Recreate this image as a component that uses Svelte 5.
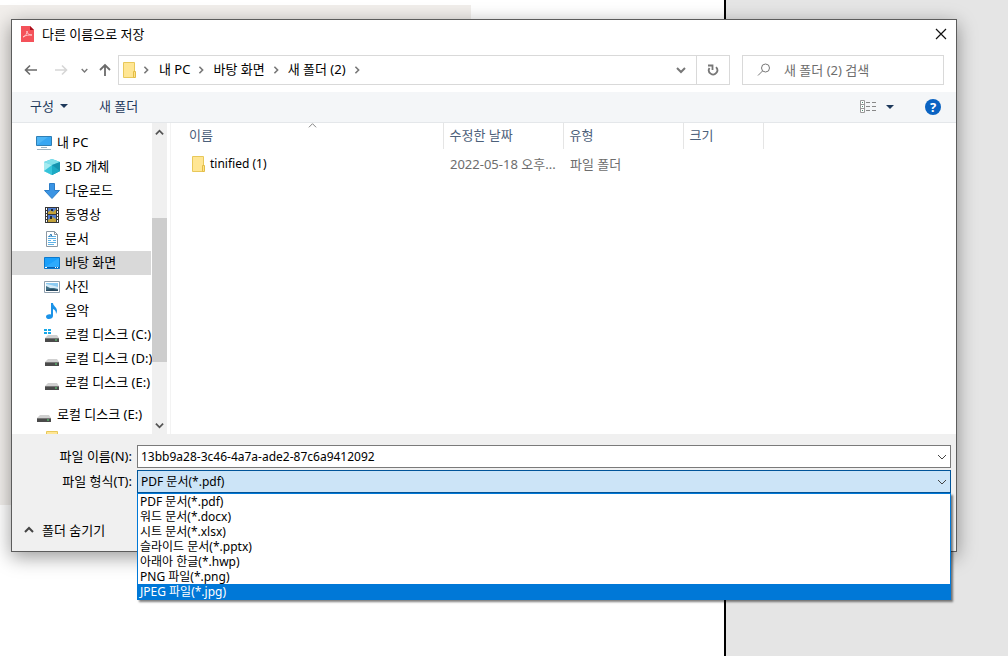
<script>
	let filename = $state('13bb9a28-3c46-4a7a-ade2-87c6a9412092');
	let selected = $state('PDF 문서(*.pdf)');
	let highlighted = $state('JPEG 파일(*.jpg)');
	let current = $state('desktop');

	const crumbs = ['내 PC', '바탕 화면', '새 폴더 (2)'];

	const places = [
		{ id: 'pc', name: '내 PC', level: 0 },
		{ id: 'objects', name: '3D 개체', level: 1 },
		{ id: 'downloads', name: '다운로드', level: 1 },
		{ id: 'videos', name: '동영상', level: 1 },
		{ id: 'documents', name: '문서', level: 1 },
		{ id: 'desktop', name: '바탕 화면', level: 1 },
		{ id: 'pictures', name: '사진', level: 1 },
		{ id: 'music', name: '음악', level: 1 },
		{ id: 'system', name: '로컬 디스크 (C:)', level: 1 },
		{ id: 'disk', name: '로컬 디스크 (D:)', level: 1 },
		{ id: 'disk', name: '로컬 디스크 (E:)', level: 1 },
		{ id: 'disk', name: '로컬 디스크 (E:)', level: 0, spaced: true },
		{ id: 'folder', name: '', level: 1 }
	];

	const files = [
		{ name: 'tinified (1)', date: '2022-05-18 오후...', type: '파일 폴더', size: '' }
	];

	const formats = [
		'PDF 문서(*.pdf)',
		'워드 문서(*.docx)',
		'시트 문서(*.xlsx)',
		'슬라이드 문서(*.pptx)',
		'아래아 한글(*.hwp)',
		'PNG 파일(*.png)',
		'JPEG 파일(*.jpg)'
	];
</script>

{#snippet folder()}
	<svg class="icon" viewBox="0 0 16 16" aria-hidden="true">
		<path d="M2.500.5h11v15h-11z" fill="#ffe694" stroke="#e8c85a" />
		<path d="M12.500 15.500v-6h2v6z" fill="#ffe28a" stroke="#e3bd45" />
	</svg>
{/snippet}

{#snippet chevron(d, size, color, width)}
	<svg width={size} height={size} viewBox="0 0 10 10" aria-hidden="true">
		<path {d} fill="none" stroke={color} stroke-width={width} />
	</svg>
{/snippet}

{#snippet placeIcon(id)}
	{#if id == 'folder'}
		{@render folder()}
	{:else}
		<svg class="icon" viewBox="0 0 16 16" aria-hidden="true">
			{#if id == 'pc'}
				<path d="M.5 1.500h15v9H.5z" fill="#4db5f5" stroke="#2f7fb5" />
				<path d="M1 10L12 2h3v8z" fill="#2a9df0" opacity=".6" />
				<path d="M5 12.500h6M1 14.500h14" stroke="#9db2c0" />
			{:else if id == 'objects'}
				<path d="M8 0l8 3v9l-8 4-8-4V3z" fill="#35c3da" />
				<path d="M8 0l8 3-8 3-8-3z" fill="#7fdfea" />
				<path d="M0 3l8 3v10l-8-4z" fill="#a5ebf0" />
				<path d="M8 6l8-3v9l-8 4z" fill="#1592ae" />
				<path d="M0 12l8-6v10z" fill="#35c3da" />
				<path d="M8 6l8 6-8 4z" fill="#1daac4" />
			{:else if id == 'downloads'}
				<path d="M5.500.5h5v7h5L8 15.500.5 7.500h5z" fill="#3a94e4" stroke="#2c7dc7" />
			{:else if id == 'videos'}
				<path d="M1 0h14v16H1z" fill="#383838" />
				<path d="M4 1h8v6H4zM4 8h8v7H4z" fill="#4f7cd0" />
				<path d="M4 5l3-2 2 2 3-3v5H4zM4 13l4-3 4 2v3H4z" fill="#c2a23a" />
				<path d="M7 2h2v2H7zM6 9h2v3H6z" fill="#1c2a3a" />
				<path d="M2.500 1v14M13.500 1v14" stroke="#fff" stroke-dasharray="2 1" />
			{:else if id == 'documents'}
				<path d="M2.500.5h8l3 3v12h-11z" fill="#fff" stroke="#8b98a3" />
				<path d="M10.500.5v3h3" fill="none" stroke="#8b98a3" />
				<path d="M4 5.500h3M4 7.500h8M4 9.500h3M4 11.500h8M4 13.500h6M8 5.500h4M9 9.500h3" stroke="#5fb2e6" />
				<path d="M5 6l2-3 1 3" fill="none" stroke="#2b79b8" />
			{:else if id == 'desktop'}
				<path d="M.5 2.500h15v11H.5z" fill="#1aa0fb" stroke="#0b78cc" />
				<path d="M1 12L15 3v9z" fill="#41b6ff" opacity=".5" />
				<path d="M1 12.500h14" stroke="#0a5fae" />
				<path d="M1 12.500h2M11 12.500h1M13 12.500h1" stroke="#fff" />
			{:else if id == 'pictures'}
				<path d="M.5 2.500h15v11H.5z" fill="#fff" stroke="#8fa0ae" />
				<path d="M2 4h12v8H2z" fill="#8ccbf2" />
				<path d="M2 5l5 1 7 2v2H2z" fill="#d4ebf8" />
				<path d="M2 7l4 2 4 0 4 1v2H2z" fill="#3f6f86" />
				<path d="M2 11l6-1 6 1v1H2z" fill="#27485e" />
			{:else if id == 'music'}
				<path d="M7 0h2c0 3 4 4 4 8 0 1-.5 2-1 3 0-3-1-4-3-5v7c0 2-2 3-4 3-1.500 0-3-.8-3-2.300C2 12 4 11 7 11.500z" fill="#1c93e8" />
			{:else}
				<path d="M4 8h9l2 3H1z" fill="#d0d0d0" />
				<path d="M1 11h14v4H1z" fill="#4a4a4a" />
				<path d="M1 11.500h14" stroke="#777" />
				<path d="M11 13h2" stroke="#5ee07a" />
				{#if id == 'system'}
					<path d="M0 2h3v2H0zM4 2h3v2H4zM0 5h3v2H0zM4 5h3v2H4z" fill="#16a8e8" />
				{/if}
			{/if}
		</svg>
	{/if}
{/snippet}

<div class="scene">
	<div class="canvas"><div class="sheet"></div></div>
	<div class="side-panel"></div>

	<div class="dialog" role="dialog" aria-labelledby="dialog-title">
		<header class="titlebar">
			<svg class="icon" viewBox="0 0 16 16" aria-hidden="true">
				<path d="M1 0h9l4 4v12H1z" fill="#f4525a" />
				<path d="M10 0l4 4h-4z" fill="#a90f1c" />
				<path d="M3 11c3-1 4-4 4-6 0 3 2 4 5 4-3 0-6 0-9 2z" fill="none" stroke="#ffd9db" stroke-width=".8" />
			</svg>
			<h1 id="dialog-title">다른 이름으로 저장</h1>
			<button class="close" aria-label="닫기">
				<svg width="12" height="12" viewBox="0 0 12 12"><path d="M1 1l10 10M11 1L1 11" stroke="#111" stroke-width="1.200" /></svg>
			</button>
		</header>

		<div class="navbar">
			<div class="history">
				<button aria-label="뒤로">
					<svg width="14" height="14" viewBox="0 0 14 14"><path d="M13 7H2M6 2.500L1.500 7 6 11.500" fill="none" stroke="#6b6b6b" stroke-width="1.600" /></svg>
				</button>
				<button aria-label="앞으로" disabled>
					<svg width="14" height="14" viewBox="0 0 14 14"><path d="M1 7h11M8 2.500L12.500 7 8 11.500" fill="none" stroke="#d6d6d6" stroke-width="1.600" /></svg>
				</button>
				<button class="recent" aria-label="최근 위치">{@render chevron('M1 3l4 4 4-4', 7, '#777', 2)}</button>
				<button aria-label="위로">
					<svg width="14" height="14" viewBox="0 0 14 14"><path d="M7 13V2M2 7l5-5 5 5" fill="none" stroke="#6b6b6b" stroke-width="1.800" /></svg>
				</button>
			</div>
			<nav class="address" aria-label="주소">
				{@render folder()}
				<span class="sep first">{@render chevron('M3 1l4 4-4 4', 8, '#777', 2)}</span>
				{#each crumbs as crumb}
					<button class="crumb">{crumb}</button>
					<span class="sep">{@render chevron('M3 1l4 4-4 4', 8, '#777', 2)}</span>
				{/each}
				<button class="drop" aria-label="이전 위치">{@render chevron('M1 3l4 4 4-4', 10, '#777', 2)}</button>
				<button class="refresh" aria-label="새로 고침">
					<svg width="12" height="12" viewBox="0 0 12 12"><path d="M9 3.200A4.200 4.200 0 1 1 2.500 4M1 1.500h4.500V6" fill="none" stroke="#777" stroke-width="1.800" /></svg>
				</button>
			</nav>
			<label class="search">
				<svg width="14" height="14" viewBox="0 0 14 14" aria-hidden="true"><circle cx="8.500" cy="5" r="4" fill="none" stroke="#777" /><path d="M5.500 8L1 12.500" stroke="#777" /></svg>
				<input type="text" placeholder="새 폴더 (2) 검색" aria-label="새 폴더 (2) 검색" />
			</label>
		</div>

		<div class="toolbar">
			<button>구성 <svg width="8" height="4" viewBox="0 0 8 4"><path d="M0 0h8L4 4z" fill="#1e395b" /></svg></button>
			<button>새 폴더</button>
			<button class="view" aria-label="보기 변경">
				<svg width="17" height="14" viewBox="0 0 17 14">
					<path d="M.5.5h4v12h-4zM.5 4.500h4M.5 8.500h4" fill="#fff" stroke="#999" />
					<path d="M2 2.500h1M2 6.500h1M2 10.500h1" stroke="#4c8a70" />
					<path d="M6 2.500h4M12 2.500h4M6 6.500h4M12 6.500h4M6 10.500h4M12 10.500h4" stroke="#888" />
				</svg>
				<svg width="8" height="4" viewBox="0 0 8 4"><path d="M0 0h8L4 4z" fill="#1e395b" /></svg>
			</button>
			<button class="help" aria-label="도움말">?</button>
		</div>

		<div class="browser">
			<div class="tree">
				<ul>
					{#each places as place}
						<li class:spaced={place.spaced}>
							<button
								class:nested={place.level == 1}
								class:active={place.id == current}
								aria-label={place.name || '폴더'}
								onclick={() => (current = place.id)}
							>
								{@render placeIcon(place.id)}
								<span>{place.name}</span>
							</button>
						</li>
					{/each}
				</ul>
			</div>
			<div class="scrollbar">
				<button aria-label="위로 스크롤">{@render chevron('M1 7l4-4 4 4', 9, '#555', 2)}</button>
				<div class="track"><div class="thumb"></div></div>
				<button aria-label="아래로 스크롤">{@render chevron('M1 3l4 4 4-4', 9, '#555', 2)}</button>
			</div>
			<div class="files">
				<table>
					<colgroup>
						<col class="col-name" />
						<col class="col-date" />
						<col class="col-type" />
						<col class="col-size" />
						<col />
					</colgroup>
					<thead>
						<tr>
							<th>
								<span class="sort">{@render chevron('M1 7l4-4 4 4', 9, '#777', 1)}</span>
								이름
							</th>
							<th>수정한 날짜</th>
							<th>유형</th>
							<th>크기</th>
							<td></td>
						</tr>
					</thead>
					<tbody>
						{#each files as file}
							<tr>
								<td class="file-name"><div>{@render folder()}<span>{file.name}</span></div></td>
								<td>{file.date}</td>
								<td>{file.type}</td>
								<td>{file.size}</td>
								<td></td>
							</tr>
						{/each}
					</tbody>
				</table>
			</div>
		</div>

		<footer>
			<div class="field">
				<label for="file-name">파일 이름(N):</label>
				<div class="combo">
					<input id="file-name" type="text" bind:value={filename} />
					<span class="arrow">{@render chevron('M1 3l4 4 4-4', 10, '#444', 1)}</span>
				</div>
			</div>
			<div class="field">
				<label for="file-type">파일 형식(T):</label>
				<div class="combo open">
					<select id="file-type" bind:value={selected}>
						{#each formats as format}
							<option>{format}</option>
						{/each}
					</select>
					<span class="arrow">{@render chevron('M1 3l4 4 4-4', 10, '#444', 1)}</span>
					<div class="options" role="listbox" aria-label="파일 형식">
						{#each formats as format}
							<button
								role="option"
								aria-selected={format == highlighted}
								class:highlighted={format == highlighted}
								onmouseenter={() => (highlighted = format)}
								onclick={() => (selected = format)}
							>{format}</button>
						{/each}
					</div>
				</div>
			</div>
			<button class="hide-folders">
				{@render chevron('M1 7l4-4 4 4', 10, '#444', 2)}
				폴더 숨기기
			</button>
		</footer>
	</div>
</div>

<style>
	:global(body) {
		margin: 0;
	}

	.scene {
		background: #fff;
		color: #000;
		display: flex;
		font-family: "Noto Sans", "Noto Sans CJK KR", sans-serif;
		font-size: 13px;
		line-height: 18px;
		min-height: 100vh;
		overflow: hidden;
		position: relative;
	}

	.canvas {
		flex: 1;
		padding-top: 5px;
	}

	.sheet {
		background: #f1eeeb;
		height: 500px;
		width: 65%;
	}

	.side-panel {
		background: #e5e5e5;
		border-left: 2px solid #000;
		box-sizing: border-box;
		width: 284px;
	}

	button,
	input,
	select {
		background: transparent;
		border: none;
		box-sizing: border-box;
		color: inherit;
		font: inherit;
		margin: 0;
		outline: none;
		padding: 0;
	}

	button {
		align-items: center;
		display: flex;
	}

	svg {
		display: block;
		flex: none;
	}

	.icon {
		height: 16px;
		width: 16px;
	}

	.dialog {
		background: #fff;
		border: 1px solid #5c5c5c;
		box-shadow: 0 5px 18px rgba(0, 0, 0, 0.4);
		left: 11px;
		position: absolute;
		right: 51px;
		top: 19px;
	}

	.titlebar {
		align-items: center;
		display: flex;
		gap: 6px;
		height: 28px;
		padding: 0 9px 0 8px;

		& h1 {
			flex: 1;
			font-size: 13px;
			font-weight: normal;
			margin: 0;
		}
	}

	.navbar {
		align-items: center;
		display: flex;
		height: 44px;
		padding: 0 12px;
	}

	.history {
		display: flex;
		gap: 16px;
		padding-right: 6px;

		& .recent {
			margin: 0 -6px 0 -3px;
		}
	}

	.address {
		align-items: center;
		border: 1px solid #d9d9d9;
		box-sizing: border-box;
		display: flex;
		flex: 1;
		height: 30px;
		padding-left: 2px;

		& .sep {
			padding: 0 8px 0 7px;
		}

		& .sep.first {
			padding: 0 9px 0 5px;
		}

		& .crumb {
			height: 100%;
			padding-bottom: 2px;
		}

		& .drop {
			margin-left: auto;
			padding: 0 10px;
		}

		& .refresh {
			border-left: 1px solid #d9d9d9;
			height: 100%;
			justify-content: center;
			width: 33px;
		}
	}

	.search {
		align-items: center;
		border: 1px solid #d9d9d9;
		box-sizing: border-box;
		display: flex;
		gap: 13px;
		height: 30px;
		margin-left: 12px;
		padding-left: 14px;
		width: 202px;

		& input {
			flex: 1;
			min-width: 0;
			padding-bottom: 1px;
		}

		& input::placeholder {
			color: #6d6d6d;
			opacity: 1;
		}
	}

	.toolbar {
		align-items: center;
		background: #f4f6f8;
		border-bottom: 1px solid #e4e7ea;
		color: #1e395b;
		display: flex;
		gap: 31px;
		height: 30px;
		padding: 0 15px 0 18px;

		& button {
			gap: 6px;
			padding-bottom: 2px;
		}

		& .view {
			gap: 9px;
			margin-left: auto;
			padding: 0;
		}

		& .help {
			background: #0a63c2;
			border-radius: 50%;
			color: #fff;
			font-weight: bold;
			height: 16px;
			justify-content: center;
			padding: 0;
			width: 16px;
		}
	}

	.browser {
		display: flex;
		height: 311px;
	}

	.tree {
		overflow: hidden;
		width: 140px;

		& ul {
			list-style: none;
			margin: 0;
			padding: 8px 0 0;
		}

		& .spaced {
			margin-top: 8px;
		}

		& button {
			gap: 5px;
			height: 24px;
			padding-left: 24px;
			white-space: nowrap;
			width: 139px;
		}

		& button span {
			padding-bottom: 2px;
		}

		& button.nested {
			padding-left: 32px;
		}

		& button.active {
			background: #d9d9d9;
		}
	}

	.scrollbar {
		background: #f0f0f0;
		display: flex;
		flex-direction: column;
		width: 15px;

		& button {
			height: 18px;
			justify-content: center;
		}

		& .track {
			flex: 1;
			padding-top: 77px;
		}

		& .thumb {
			background: #cdcdcd;
			height: 144px;
		}
	}

	.files {
		border-left: 1px solid #f3f3f3;
		flex: 1;
		margin-left: 3px;
		padding-left: 12px;

		& table {
			border-collapse: collapse;
			table-layout: fixed;
			width: 100%;
		}

		& .col-name {
			width: 260px;
		}

		& .col-date,
		& .col-type {
			width: 120px;
		}

		& .col-size {
			width: 80px;
		}

		& th {
			border-right: 1px solid #e5e5e5;
			color: #4c607a;
			font-weight: normal;
			height: 24px;
			padding: 0 6px 2px;
			position: relative;
			text-align: left;
		}

		& .sort {
			left: 0;
			position: absolute;
			right: 0;
			top: -2px;
		}

		& .sort :global(svg) {
			margin: 0 auto;
		}

		& td {
			color: #6d6d6d;
			padding: 0 0 0 7px;
			white-space: nowrap;
		}

		& tbody td {
			height: 30px;
		}

		& .file-name {
			color: #000;
			font-size: 12px;
		}

		& .file-name div {
			align-items: center;
			display: flex;
			gap: 4px;
		}
	}

	footer {
		background: #f0f0f0;
		padding: 11px 5px 9px 0;
	}

	.field {
		align-items: center;
		display: flex;
		margin-bottom: 2px;

		& label {
			padding: 0 5px 2px 0;
			text-align: right;
			width: 120px;
		}
	}

	.combo {
		background: #fff;
		border: 1px solid #7a7a7a;
		box-sizing: border-box;
		display: flex;
		flex: 1;
		font-size: 12px;
		height: 23px;
		position: relative;

		& input,
		& select {
			appearance: none;
			padding: 0 24px 0 3px;
			width: 100%;
		}

		& .arrow {
			pointer-events: none;
			position: absolute;
			right: 3px;
			top: 6px;
		}

		&.open {
			background: #cce4f7;
			border-color: #005499;
		}
	}

	.options {
		background: #fff;
		border: 1px solid #0078d7;
		box-shadow: 2px 2px 2px rgba(0, 0, 0, 0.5);
		left: -1px;
		position: absolute;
		right: -1px;
		top: 22px;

		& button {
			height: 15px;
			line-height: 15px;
			padding-left: 2px;
			width: 100%;
		}

		& .highlighted {
			background: #0078d7;
			color: #fff;
		}
	}

	.hide-folders {
		gap: 8px;
		height: 24px;
		margin-top: 25px;
		padding-left: 12px;
	}
</style>
